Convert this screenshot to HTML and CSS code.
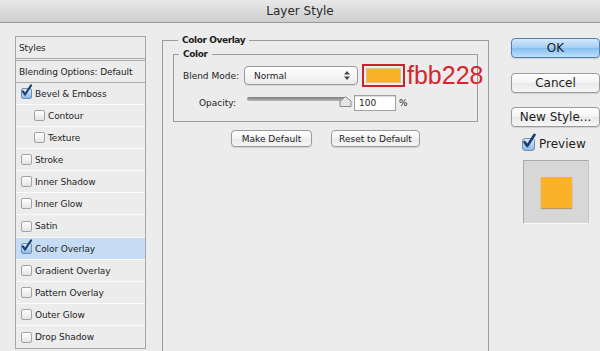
FILE: index.html
```html
<!doctype html>
<html lang="en">
<head>
    <link rel="stylesheet" href="styles.css">
    <meta charset="UTF-8">
    <title>Layer Style</title>
</head>
<body>
    <div class="titlebar">Layer Style</div>

    <div class="main">
        <!-- Styles list -->
        <div class="styles-list">
            <div class="row head">Styles</div>
            <div class="row blend">Blending Options: Default</div>
            <div class="row sep-dark"><span class="cb on"><svg width="15" height="15" viewBox="0 0 15 15"><path d="M4 7.5 L6 10.5 L12 1.5" fill="none" stroke="#1d3d72" stroke-width="2.2" stroke-linecap="round" stroke-linejoin="round"/></svg></span>Bevel &amp; Emboss</div>
            <div class="row sub"><span class="cb"></span>Contour</div>
            <div class="row sub"><span class="cb"></span>Texture</div>
            <div class="row"><span class="cb"></span>Stroke</div>
            <div class="row"><span class="cb"></span>Inner Shadow</div>
            <div class="row"><span class="cb"></span>Inner Glow</div>
            <div class="row tall"><span class="cb"></span>Satin</div>
            <div class="row selected"><span class="cb on"><svg width="15" height="15" viewBox="0 0 15 15"><path d="M4 7.5 L6 10.5 L12 1.5" fill="none" stroke="#1d3d72" stroke-width="2.2" stroke-linecap="round" stroke-linejoin="round"/></svg></span>Color Overlay</div>
            <div class="row"><span class="cb"></span>Gradient Overlay</div>
            <div class="row"><span class="cb"></span>Pattern Overlay</div>
            <div class="row"><span class="cb"></span>Outer Glow</div>
            <div class="row tall"><span class="cb"></span>Drop Shadow</div>
        </div>

        <!-- Settings -->
        <fieldset class="settings">
            <legend>Color Overlay</legend>
            <fieldset class="color-group">
                <legend>Color</legend>
                <div class="field">
                    <label>Blend Mode:</label>
                    <div class="select">
                        <span>Normal</span>
                        <svg width="6" height="9" viewBox="0 0 6 9"><path d="M3 0 L6 3.5 H0 Z M3 9 L6 5.5 H0 Z" fill="#444"/></svg>
                    </div>
                    <div class="swatch"><div class="swatch-fill"></div></div>
                    <span class="hex">fbb228</span>
                </div>
                <div class="field opacity">
                    <label>Opacity:</label>
                    <div class="slider">
                        <div class="track"></div>
                        <svg class="thumb" width="13" height="11" viewBox="0 0 13 11"><path d="M1 10.5 V5 L6.5 0.7 L12 5 V10.5 Z" fill="#e4e4e4" stroke="#8a8a8a"/></svg>
                    </div>
                    <div class="num">100</div>
                    <span class="pct">%</span>
                </div>
            </fieldset>
            <div class="defaults">
                <button class="btn small">Make Default</button>
                <button class="btn small">Reset to Default</button>
            </div>
        </fieldset>

        <!-- Actions -->
        <div class="actions">
            <button class="btn big primary">OK</button>
            <button class="btn big">Cancel</button>
            <button class="btn big">New Style...</button>
            <div class="preview-check">
                <span class="cb on big-cb"><svg width="18" height="18" viewBox="0 0 18 18"><path d="M4.5 9 L7.3 13 L14.5 1.8" fill="none" stroke="#1d3d72" stroke-width="2.6" stroke-linecap="round" stroke-linejoin="round"/></svg></span>
                Preview
            </div>
            <div class="preview-box"><div class="preview-fill"></div></div>
        </div>
    </div>
</body>
</html>
```

FILE: styles.css
```css
body {
    margin: 0;
    width: 600px;
    height: 351px;
    overflow: hidden;
    background-color: #ececec;
    font-family: "DejaVu Sans", Verdana, sans-serif;
    font-size: 9px;
    color: #1e1e1e;
}

.titlebar {
    height: 22px;
    line-height: 23px;
    text-align: center;
    font-size: 12px;
    color: #2a2a2a;
    background: linear-gradient(#e9e9e9, #cdcdcd);
    border-bottom: 1px solid #9a9a9a;
}

.main {
    display: flex;
    align-items: flex-start;
    padding: 13px 0 0 15px;
    height: 315px;
}

.main > * {
    flex-shrink: 0;
}

/* left list */
.styles-list {
    width: 129px;
    border: 1px solid #a6a6a6;
    background-color: #ececec;
}

.row {
    display: flex;
    align-items: center;
    height: 21px;
    padding-left: 5px;
    border-top: 1px solid #fafafa;
    letter-spacing: -0.1px;
}

.row.tall {
    height: 22px;
}

.row.head {
    border-top: none;
    height: 21px;
    padding-left: 3px;
    border-bottom: 3px double #a9a9a9;
}

.row.blend {
    border-top: none;
    padding-left: 3px;
}

.row.sep-dark {
    border-top: 1px solid #a9a9a9;
}

.row.sub {
    padding-left: 18px;
}

.row.selected {
    background-color: #c6dcf5;
}

.cb {
    position: relative;
    flex-shrink: 0;
    width: 9px;
    height: 9px;
    margin-right: 3px;
    border: 1px solid #a3a3a3;
    border-radius: 2px;
    background: linear-gradient(#ffffff, #e4e4e4);
}

.cb.on {
    border-color: #6f8fb6;
    background: linear-gradient(#dcebfa, #8db8e4);
}

.cb svg {
    position: absolute;
    left: -3px;
    top: -5px;
}

/* settings */
.settings {
    box-sizing: border-box;
    margin: -1px 0 0 16px;
    padding: 0 10px;
    width: 327px;
    min-width: 0;
    height: 330px;
    border: 1px solid #9c9c9c;
    border-bottom: none;
}

legend {
    margin-left: 5px;
    padding: 0 4px;
    font-weight: bold;
    line-height: 10px;
    letter-spacing: -0.4px;
}

.color-group {
    min-width: 0;
    margin: 4px 0 0 0;
    padding: 0 0 9px 8px;
    border: 1px solid #9c9c9c;
}

.color-group legend {
    margin-left: -3px;
}

.field {
    display: flex;
    align-items: center;
}

.field > * {
    flex-shrink: 0;
}

.field label {
    width: 57px;
    margin-right: 5px;
    text-align: right;
}

.field:first-of-type {
    margin-top: 5px;
    height: 23px;
}

.select {
    display: flex;
    align-items: center;
    justify-content: space-between;
    box-sizing: border-box;
    width: 114px;
    height: 19px;
    padding: 0 7px 0 9px;
    border: 1px solid #9a9a9a;
    border-radius: 4px;
    background: linear-gradient(#ffffff, #ececec);
    box-shadow: 0 1px 0 rgba(0, 0, 0, 0.08);
}

.swatch {
    box-sizing: border-box;
    width: 43px;
    height: 23px;
    margin-left: 4px;
    padding: 2px;
    border: 2px solid #c9232b;
}

.swatch-fill {
    height: 100%;
    box-sizing: border-box;
    border: 1px solid #d9c29a;
    background-color: #fbb228;
}

.hex {
    margin-left: 2px;
    font-family: "Liberation Sans", Arial, sans-serif;
    font-size: 25px;
    line-height: 23px;
    color: #d6262d;
}

.opacity {
    margin-top: 7px;
    height: 18px;
}

.opacity label {
    width: 54px;
    margin-right: 8px;
}

.slider {
    position: relative;
    width: 108px;
    height: 18px;
}

.track {
    position: absolute;
    left: 3px;
    top: 3px;
    width: 98px;
    height: 4px;
    border-radius: 2px;
    background: linear-gradient(#7c7c7c, #b9b9b9);
}

.thumb {
    position: absolute;
    left: 95px;
    top: 2px;
}

.num {
    box-sizing: border-box;
    width: 42px;
    height: 16px;
    margin-left: 2px;
    padding: 2px 0 0 4px;
    border: 1px solid #a0a0a0;
    background-color: #fff;
    box-shadow: inset 0 1px 1px rgba(0, 0, 0, 0.15);
}

.pct {
    margin-left: 3px;
}

.defaults {
    display: flex;
    justify-content: center;
    gap: 19px;
    margin-top: 8px;
}

.btn {
    box-sizing: border-box;
    font-family: "DejaVu Sans", Verdana, sans-serif;
    color: #1e1e1e;
    border: 1px solid #9a9a9a;
    border-radius: 4px;
    background: linear-gradient(#ffffff, #f3f3f3 50%, #e9e9e9 51%, #f6f6f6);
    box-shadow: 0 1px 1px rgba(0, 0, 0, 0.12);
    padding: 0;
}

.btn.small {
    height: 17px;
    font-size: 9px;
}

.btn.small:first-child {
    width: 81px;
}

.btn.small:last-child {
    width: 89px;
}

/* right column */
.actions {
    display: flex;
    flex-direction: column;
    margin: 2px 0 0 22px;
    width: 89px;
}

.btn.big {
    height: 20px;
    font-size: 12px;
    margin-bottom: 14px;
}

.btn.big.primary {
    margin-bottom: 15px;
    border-color: #4f80b6;
    background: linear-gradient(#d4e9fb, #a3cdf3 50%, #84bdf0 51%, #bfe1fa);
}

.btn.big:nth-child(3) {
    margin-bottom: 10px;
}

.preview-check {
    display: flex;
    align-items: center;
    margin-left: 11px;
    font-size: 12px;
    height: 14px;
}

.big-cb {
    width: 11px;
    height: 11px;
    margin-right: 4px;
    border-radius: 3px;
}

.big-cb svg {
    left: -3px;
    top: -6px;
}

.preview-box {
    display: flex;
    align-items: center;
    justify-content: center;
    box-sizing: border-box;
    width: 66px;
    height: 64px;
    margin: 9px 0 0 12px;
    background-color: #d7d7d7;
    border: 1px solid #a9a9a9;
    border-bottom-color: #fafafa;
    border-right-color: #c9c9c9;
}

.preview-fill {
    width: 31px;
    height: 31px;
    background-color: #fbb228;
    box-shadow: 0 1px 1px rgba(150, 90, 0, 0.5);
}
```
